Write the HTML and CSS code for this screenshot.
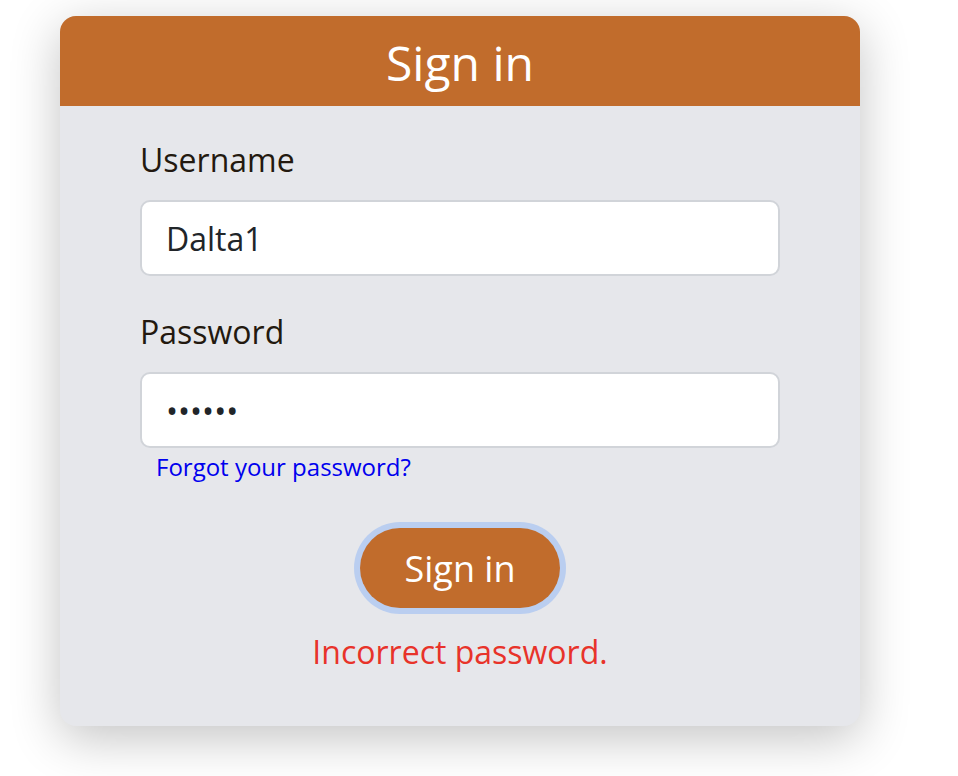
FILE: index.html
```html
<!DOCTYPE html>
<html lang="en">
<head>
<meta charset="utf-8">
<title>Sign in</title>
<link rel="stylesheet" href="styles.css">
</head>
<body>
<div class="card">
  <div class="card-header">Sign in</div>
  <form class="card-body" onsubmit="return false;">
    <label class="field-label" for="username">Username</label>
    <input class="field-input" id="username" type="text" value="Dalta1">
    <label class="field-label field-label-second" for="password">Password</label>
    <input class="field-input" id="password" type="password" value="123456">
    <a class="forgot" href="#">Forgot your password?</a>
    <div class="actions">
      <button class="btn-signin" type="submit">Sign in</button>
    </div>
    <div class="error">Incorrect password.</div>
  </form>
</div>
</body>
</html>
```
FILE: styles.css
```css
html, body {
  margin: 0;
  padding: 0;
  background: #ffffff;
}

body {
  font-family: "Open Sans", "Noto Sans", sans-serif;
  padding: 16px 0 0 60px;
  min-height: 776px;
  box-sizing: border-box;
}

.card {
  width: 800px;
  height: 710px;
  border-radius: 16px;
  overflow: hidden;
  background: #e6e7eb;
  box-shadow: 0 12px 50px rgba(0, 0, 0, 0.24);
  display: flex;
  flex-direction: column;
}

.card-header {
  height: 90px;
  line-height: 90px;
  padding-top: 2px;
  box-sizing: border-box;
  background: #c16c2c;
  color: #ffffff;
  font-size: 48px;
  text-align: center;
}

.card-body {
  display: flex;
  flex-direction: column;
  padding: 30px 80px 0 80px;
  margin: 0;
}

.field-label {
  font-size: 32px;
  line-height: 48px;
  color: #23190f;
  margin-bottom: 16px;
}

.field-label-second {
  margin-top: 32px;
}

.field-input {
  box-sizing: border-box;
  width: 640px;
  height: 76px;
  border: 2px solid #d1d4d9;
  border-radius: 10px;
  background: #ffffff;
  padding: 0 24px;
  font-family: "Open Sans", "Noto Sans", sans-serif;
  font-size: 32px;
  color: #212529;
  outline: none;
  margin: 0;
}

.forgot {
  align-self: flex-start;
  margin: 2px 0 0 16px;
  font-size: 24px;
  line-height: 33px;
  color: #0000ee;
  text-decoration: none;
}

.actions {
  display: flex;
  justify-content: center;
  margin-top: 45px;
}

.btn-signin {
  width: 200px;
  height: 80px;
  border: none;
  border-radius: 40px;
  background: #c16c2c;
  color: #ffffff;
  font-family: "Open Sans", "Noto Sans", sans-serif;
  font-size: 36px;
  box-shadow: 0 0 0 6px #bacef0;
  cursor: pointer;
  padding: 0;
}

.error {
  margin-top: 20px;
  text-align: center;
  font-size: 32px;
  line-height: 48px;
  color: #e8332a;
}
```
